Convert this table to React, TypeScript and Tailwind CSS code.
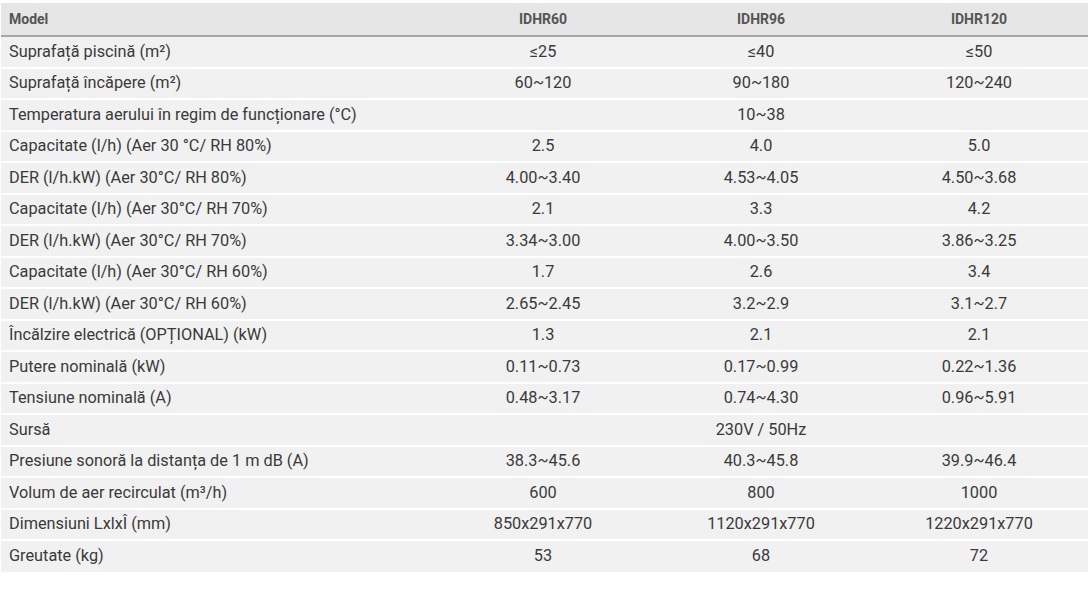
import React from "react";

type Row = { label: string; values: string[] };

const rows: Row[] = [
  { label: "Suprafață piscină (m²)", values: ["≤25", "≤40", "≤50"] },
  { label: "Suprafață încăpere (m²)", values: ["60~120", "90~180", "120~240"] },
  { label: "Temperatura aerului în regim de funcționare (°C)", values: ["10~38"] },
  { label: "Capacitate (l/h) (Aer 30 °C/ RH 80%)", values: ["2.5", "4.0", "5.0"] },
  { label: "DER (l/h.kW) (Aer 30°C/ RH 80%)", values: ["4.00~3.40", "4.53~4.05", "4.50~3.68"] },
  { label: "Capacitate (l/h) (Aer 30°C/ RH 70%)", values: ["2.1", "3.3", "4.2"] },
  { label: "DER (l/h.kW) (Aer 30°C/ RH 70%)", values: ["3.34~3.00", "4.00~3.50", "3.86~3.25"] },
  { label: "Capacitate (l/h) (Aer 30°C/ RH 60%)", values: ["1.7", "2.6", "3.4"] },
  { label: "DER (l/h.kW) (Aer 30°C/ RH 60%)", values: ["2.65~2.45", "3.2~2.9", "3.1~2.7"] },
  { label: "Încălzire electrică (OPȚIONAL) (kW)", values: ["1.3", "2.1", "2.1"] },
  { label: "Putere nominală (kW)", values: ["0.11~0.73", "0.17~0.99", "0.22~1.36"] },
  { label: "Tensiune nominală (A)", values: ["0.48~3.17", "0.74~4.30", "0.96~5.91"] },
  { label: "Sursă", values: ["230V / 50Hz"] },
  { label: "Presiune sonoră la distanța de 1 m dB (A)", values: ["38.3~45.6", "40.3~45.8", "39.9~46.4"] },
  { label: "Volum de aer recirculat (m³/h)", values: ["600", "800", "1000"] },
  { label: "Dimensiuni LxlxÎ (mm)", values: ["850x291x770", "1120x291x770", "1220x291x770"] },
  { label: "Greutate (kg)", values: ["53", "68", "72"] },
];

export default function App() {
  return (
    <div className="w-[1090px] h-[589px] bg-white pt-[3px] pl-[1px]" style={{ fontFamily: "Roboto, 'Liberation Sans', sans-serif" }}>
      <table className="w-[1087px] border-collapse table-fixed">
        <colgroup>
          <col className="w-[433px]" />
          <col className="w-[218px]" />
          <col className="w-[218px]" />
          <col className="w-[218px]" />
        </colgroup>
        <thead>
          <tr className="bg-[#e6e6e6] h-[33px] border-b-2 border-[#a6a6a6] text-[14px] font-bold text-[#555555]">
            <th className="text-left pl-[8px] font-bold">Model</th>
            <th className="text-center font-bold">IDHR60</th>
            <th className="text-center font-bold">IDHR96</th>
            <th className="text-center font-bold">IDHR120</th>
          </tr>
        </thead>
        <tbody className="text-[16.3px] text-[#3a3a3a]">
          {rows.map((r, i) => (
            <tr key={i} className={"bg-[#f1f1f1] h-[31.5px] " + (i > 0 ? "border-t-2 border-white" : "")}>
              <td className="pl-[8px] align-middle whitespace-nowrap leading-none">{r.label}</td>
              {r.values.length === 1 ? (
                <td colSpan={3} className="text-center align-middle leading-none">{r.values[0]}</td>
              ) : (
                r.values.map((v, j) => (
                  <td key={j} className="text-center align-middle leading-none">{v}</td>
                ))
              )}
            </tr>
          ))}
        </tbody>
      </table>
    </div>
  );
}
